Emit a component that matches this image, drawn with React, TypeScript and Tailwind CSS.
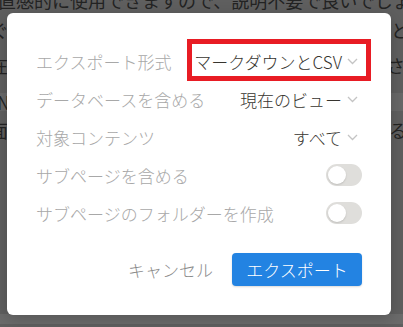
import React from 'react'

const font = "font-['Noto_Sans_CJK_JP','Noto_Sans',sans-serif]"

function Chevron() {
  return (
    <svg width="11" height="7" viewBox="0 0 11 7" className="ml-[5px] shrink-0">
      <polyline points="1,1 5.5,5.5 10,1" fill="none" stroke="#c4c4c4" strokeWidth="1.3" />
    </svg>
  )
}

function Toggle() {
  return (
    <div className="flex h-[22px] w-[36px] items-center rounded-full bg-[#dfdedb] p-[2px]">
      <div className="h-[18px] w-[18px] rounded-full bg-white shadow-[0_1px_2px_rgba(0,0,0,0.15)]" />
    </div>
  )
}

type Row = { label: string; value?: string }

const rows: Row[] = [
  { label: 'エクスポート形式', value: 'マークダウンとCSV' },
  { label: 'データベースを含める', value: '現在のビュー' },
  { label: '対象コンテンツ', value: 'すべて' },
  { label: 'サブページを含める' },
  { label: 'サブページのフォルダーを作成' },
]

export default function App() {
  return (
    <div className={`relative h-[327px] w-[403px] overflow-hidden bg-[#5f5f5f] text-[#232323] ${font}`}>
      {/* dimmed page behind the dialog */}
      <div className="flex flex-col text-[18px] leading-[18px]">
        <div className="-mt-[9px] ml-[-2px] h-[18px] whitespace-nowrap">
          直感的に使用できますので、説明不要で良いでしょう
        </div>
        <div className="mt-[12px] flex h-[18px] justify-between whitespace-nowrap">
          <span className="-ml-[9px]">ぐ</span>
          <span className="-mr-[6px]">と</span>
        </div>
        <div className="mt-[17px] flex h-[18px] justify-between whitespace-nowrap">
          <span className="-ml-[10px]">在</span>
          <span className="-mr-[20px]">さい</span>
        </div>
        <div className="mt-[19px] flex h-[18px] items-center bg-[#686868] whitespace-nowrap">
          <span className="-ml-[3px]">N</span>
        </div>
        <div className="mt-[10px] flex h-[18px] justify-between whitespace-nowrap">
          <span className="-ml-[10px]">面</span>
          <span className="-mr-[4px]">る</span>
        </div>
        <div className="mt-[175px] h-[10px] bg-[#6b6b6b]" />
      </div>

      {/* dialog */}
      <div className="absolute left-[7px] top-[13px] flex h-[302px] w-[384px] flex-col rounded-[6px] bg-white px-[29px] pt-[29px] font-light shadow-[0_4px_16px_rgba(0,0,0,0.2)]">
        {rows.map((r) => (
          <div key={r.label} className="flex h-[38px] items-center justify-between text-[17px] leading-none">
            <span className="text-[#a8a8a8]">{r.label}</span>
            {r.value ? (
              <span className="flex items-center pr-[4px] text-[#37352f]">
                {r.value}
                <Chevron />
              </span>
            ) : (
              <Toggle />
            )}
          </div>
        ))}
        <div className="mt-[21px] flex items-center justify-end gap-[19px] text-[17px] leading-none">
          <span className="text-[#8b8b8b]">キャンセル</span>
          <button className="flex h-[33px] w-[130px] items-center justify-center rounded-[4px] bg-[#2383e2] font-light text-white shadow-[0_1px_2px_rgba(0,0,0,0.15)]">
            エクスポート
          </button>
        </div>
      </div>

      {/* red annotation box */}
      <div className="absolute left-[187px] top-[39px] h-[42px] w-[184px] border-[5px] border-[#e81c24]" />
    </div>
  )
}
